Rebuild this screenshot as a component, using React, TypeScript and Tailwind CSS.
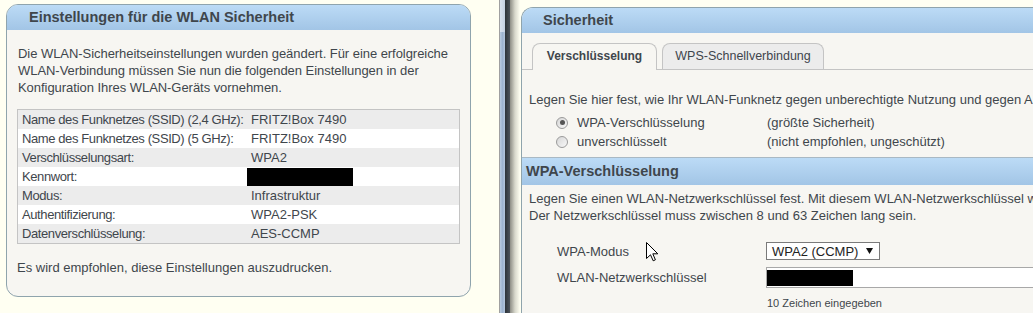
import React from "react";

function Radio({ checked }: { checked?: boolean }) {
  return (
    <span className="w-[12px] h-[12px] rounded-full border border-[#9a9a9a] bg-gradient-to-br from-[#d6d6d6] to-[#f8f8f8] flex items-center justify-center shrink-0">
      {checked ? <span className="w-[5px] h-[5px] rounded-full bg-[#555]" /> : null}
    </span>
  );
}

const rows: [string, string | null][] = [
  ["Name des Funknetzes (SSID) (2,4 GHz):", "FRITZ!Box 7490"],
  ["Name des Funknetzes (SSID) (5 GHz):", "FRITZ!Box 7490"],
  ["Verschlüsselungsart:", "WPA2"],
  ["Kennwort:", null],
  ["Modus:", "Infrastruktur"],
  ["Authentifizierung:", "WPA2-PSK"],
  ["Datenverschlüsselung:", "AES-CCMP"],
];

export default function App() {
  return (
    <div className="relative w-[1033px] h-[313px] overflow-hidden flex bg-[#fffff2] text-[#3f464c] font-['Liberation_Sans',Arial,sans-serif] text-[13px] leading-[17px]">
      {/* Left pane */}
      <div className="w-[499px] shrink-0 pl-[6px] pt-[4px]">
        <div className="w-[465px] h-[293px] rounded-[12px] border border-[#8fa4ad] bg-[#f7f6f2] overflow-hidden">
          <div className="h-[25px] bg-gradient-to-b from-[#bcdbf6] to-[#a2c5e6] pl-[22px] flex items-center font-bold text-[14.5px]">
            Einstellungen für die WLAN Sicherheit
          </div>
          <div className="px-[10px] pt-[15px]">
            <p className="pl-[1px] tracking-[-0.05px]">
              Die WLAN-Sicherheitseinstellungen wurden geändert. Für eine erfolgreiche
              <br />
              WLAN-Verbindung müssen Sie nun die folgenden Einstellungen in der
              <br />
              Konfiguration Ihres WLAN-Geräts vornehmen.
            </p>
            <div className="mt-[13px] border border-[#c4c4c4]">
              {rows.map(([label, value], i) => (
                <div
                  key={label}
                  className={`flex items-center h-[19px] whitespace-nowrap ${i % 2 === 0 ? "bg-[#ececec]" : "bg-white"}`}
                >
                  <div className="w-[233px] pl-[4px] shrink-0 tracking-[-0.4px]">{label}</div>
                  {value !== null ? (
                    <div>{value}</div>
                  ) : (
                    <div className="ml-[-4px] w-[106px] h-[18px] bg-black" />
                  )}
                </div>
              ))}
            </div>
            <p className="mt-[15px]">Es wird empfohlen, diese Einstellungen auszudrucken.</p>
          </div>
        </div>
      </div>

      {/* Divider */}
      <div className="w-[1px] shrink-0 bg-[#a0a0a0]" />
      <div className="w-[5px] shrink-0 flex flex-col">
        <div className="h-[32px] bg-gradient-to-r from-[#d9e2ee] to-[#c4d1e2]" />
        <div className="flex-1 bg-gradient-to-r from-[#b9cbe0] via-[#9db3cf] to-[#b4c6dc]" />
      </div>
      <div className="w-[5px] shrink-0 bg-gradient-to-r from-[#2c3238] to-[#4c535a]" />
      <div className="w-[10px] shrink-0 bg-gradient-to-r from-[#8e8e86] via-[#d8d8cc] to-[#fffff2]" />

      {/* Right pane */}
      <div className="flex-1 overflow-hidden pl-[1px] pt-[7px]">
        <div className="w-[560px] h-[320px] border-l border-t border-[#8fa4ad] rounded-tl-[12px] bg-[#f7f6f2] overflow-hidden">
          <div className="h-[25px] bg-gradient-to-b from-[#bcdbf6] to-[#a2c5e6] pl-[21px] flex items-center font-bold text-[14.5px]">
            Sicherheit
          </div>
          {/* Tabs */}
          <div className="pt-[10px] pl-[10px] flex items-end gap-[5px] border-b border-[#c4c4c4]">
            <div className="w-[125px] h-[27px] mb-[-1px] border border-b-0 border-[#c4c4c4] rounded-t-[8px] bg-[#f7f6f2] flex items-center justify-center font-bold text-[12px] pb-[1px]">
              Verschlüsselung
            </div>
            <div className="w-[162px] h-[26px] border border-b-0 border-[#c4c4c4] rounded-t-[8px] bg-[#ececec] flex items-center justify-center text-[12.5px]">
              WPS-Schnellverbindung
            </div>
          </div>
          <p className="pt-[21px] pl-[7px] whitespace-nowrap">
            Legen Sie hier fest, wie Ihr WLAN-Funknetz gegen unberechtigte Nutzung und gegen Angriffe geschützt ist.
          </p>
          <div className="mt-[5px] pl-[34px]">
            <div className="h-[19px] flex items-center">
              <Radio checked />
              <span className="ml-[9px] w-[190px]">WPA-Verschlüsselung</span>
              <span>(größte Sicherheit)</span>
            </div>
            <div className="h-[19px] flex items-center">
              <Radio />
              <span className="ml-[9px] w-[190px]">unverschlüsselt</span>
              <span>(nicht empfohlen, ungeschützt)</span>
            </div>
          </div>
          <div className="mt-[6px] h-[28px] border-t border-[#a9b9c4] bg-gradient-to-b from-[#bcdbf6] to-[#a2c5e6] pl-[4px] flex items-center font-bold text-[14.5px]">
            WPA-Verschlüsselung
          </div>
          <p className="pt-[5px] pl-[7px] whitespace-nowrap">
            Legen Sie einen WLAN-Netzwerkschlüssel fest. Mit diesem WLAN-Netzwerkschlüssel wird die Verbindung verschlüsselt.
            <br />
            Der Netzwerkschlüssel muss zwischen 8 und 63 Zeichen lang sein.
          </p>
          <div className="mt-[18px] pl-[35px] flex items-center h-[18px]">
            <span className="w-[209px] shrink-0">WPA-Modus</span>
            <div className="w-[114px] h-[18px] border border-[#7a7a7a] bg-white flex items-center pl-[5px] text-[#222]">
              <span>WPA2 (CCMP)</span>
              <svg className="ml-[8px]" width="7" height="6" viewBox="0 0 7 6">
                <path d="M0 0 H7 L3.5 6 Z" fill="#111" />
              </svg>
            </div>
          </div>
          <div className="mt-[7px] pl-[35px] flex items-center h-[21px]">
            <span className="w-[209px] shrink-0">WLAN-Netzwerkschlüssel</span>
            <div className="w-[300px] h-[21px] border border-[#a8a8a8] bg-white pt-[2px]">
              <div className="w-[86px] h-[16px] bg-black" />
            </div>
          </div>
          <div className="mt-[9px] pl-[245px] text-[11px] leading-[13px]">10 Zeichen eingegeben</div>
        </div>
      </div>

      {/* Mouse cursor */}
      <svg className="absolute left-[646px] top-[242px]" width="13" height="20" viewBox="0 0 13 20">
        <path
          d="M0.5 0.5 L0.5 16.5 L4.5 12.8 L7.2 18.8 L9.4 17.8 L6.8 11.8 L11.8 11.8 Z"
          fill="#fff"
          stroke="#000"
          strokeWidth="1"
          strokeLinejoin="miter"
        />
      </svg>
    </div>
  );
}
